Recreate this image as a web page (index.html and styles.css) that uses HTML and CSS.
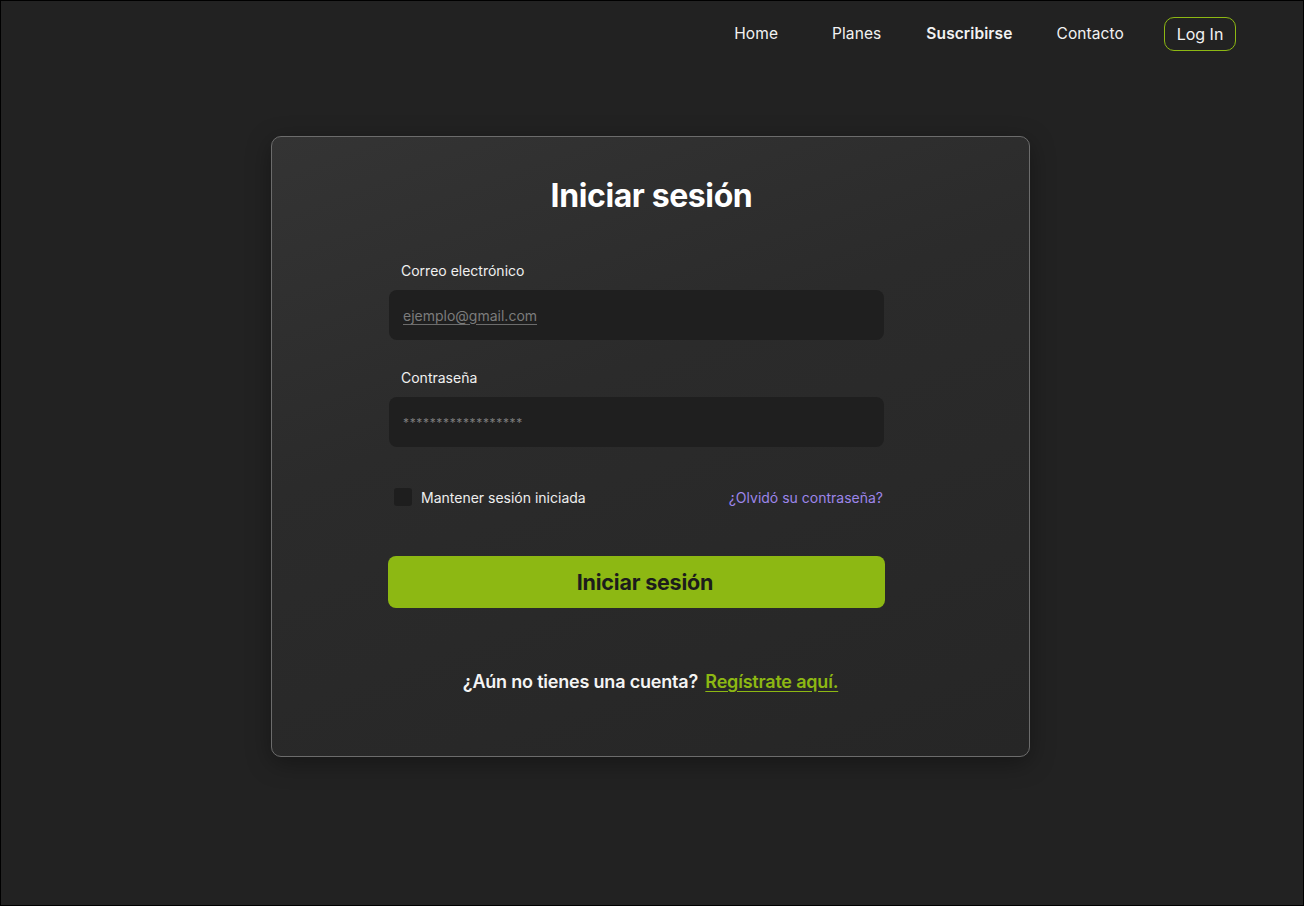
FILE: index.html
```html
<!DOCTYPE html>
<html lang="es">
<head>
<meta charset="utf-8">
<title>Iniciar sesión</title>
<link rel="stylesheet" href="styles.css">
</head>
<body>
<div class="frame">
  <header class="topbar">
    <nav class="nav">
      <a class="nav-link" href="#">Home</a>
      <a class="nav-link" href="#">Planes</a>
      <a class="nav-link nav-strong" href="#">Suscribirse</a>
      <a class="nav-link" href="#">Contacto</a>
      <a class="nav-login" href="#">Log In</a>
    </nav>
  </header>
  <main class="main">
    <section class="card">
      <h1 class="card-title">Iniciar sesión</h1>
      <form class="form">
        <label class="field">
          <span class="field-label">Correo electrónico</span>
          <span class="input"><span class="placeholder placeholder-email">ejemplo@gmail.com</span></span>
        </label>
        <label class="field">
          <span class="field-label">Contraseña</span>
          <span class="input"><span class="placeholder placeholder-pass">******************</span></span>
        </label>
        <div class="options">
          <label class="remember"><span class="checkbox"></span><span>Mantener sesión iniciada</span></label>
          <a class="forgot" href="#">¿Olvidó su contraseña?</a>
        </div>
        <button class="submit" type="button">Iniciar sesión</button>
      </form>
      <p class="signup">¿Aún no tienes una cuenta? <a class="signup-link" href="#">Regístrate aquí.</a></p>
    </section>
  </main>
</div>
</body>
</html>
```
FILE: styles.css
```css
* { box-sizing: border-box; }
html, body { margin: 0; padding: 0; }
body {
  background: #000;
  font-family: "Inter", "Liberation Sans", sans-serif;
  color: #fff;
}
.frame {
  width: 1304px;
  height: 906px;
  border: 1px solid #000;
  background: #222222;
  display: flex;
  flex-direction: column;
}
.topbar {
  display: flex;
  justify-content: flex-end;
  padding: 16px 67px 0 0;
  height: 135px;
}
.nav {
  display: flex;
  align-items: center;
  height: 33px;
}
.nav-link {
  color: #f2f2f2;
  text-decoration: none;
  font-size: 15.5px;
  letter-spacing: 0.1px;
}
.nav-link:nth-child(1) { margin-right: 54px; }
.nav-link:nth-child(2) { margin-right: 45px; }
.nav-link:nth-child(3) { margin-right: 44px; }
.nav-link:nth-child(4) { margin-right: 40px; }
.nav-strong { font-weight: 600; }
.nav-login {
  display: flex;
  align-items: center;
  justify-content: center;
  width: 72px;
  height: 34px;
  margin-top: 1px;
  border: 1px solid #8db813;
  border-radius: 10px;
  color: #f2f2f2;
  text-decoration: none;
  font-size: 16px;
}
.main {
  display: flex;
  justify-content: center;
  padding-right: 3px;
}
.card {
  width: 759px;
  height: 621px;
  border: 1px solid #6c6c6c;
  border-radius: 10px;
  background: linear-gradient(160deg, #343434 0%, #2b2b2b 40%, #262626 100%);
  box-shadow: 0 6px 24px rgba(0,0,0,0.35);
  display: flex;
  flex-direction: column;
  align-items: center;
  padding-top: 39px;
}
.card-title {
  margin: 0;
  font-size: 32px;
  font-weight: 700;
  letter-spacing: -0.4px;
  line-height: 40px;
  margin-left: 2px;
}
.form {
  align-self: flex-start;
  width: 497px;
  margin-top: 46px;
  margin-left: 116px;
  display: flex;
  flex-direction: column;
}
.field {
  display: flex;
  flex-direction: column;
  margin-bottom: 29px;
}
.field + .field { margin-bottom: 0; }
.field-label {
  font-size: 14px;
  color: #f0f0f0;
  padding-left: 13px;
  line-height: 18px;
  margin-bottom: 10px;
}
.input {
  height: 50px;
  background: #1f1f1f;
  border-radius: 8px;
  display: flex;
  align-items: center;
  padding-left: 14px;
  margin-left: 1px;
  margin-right: 1px;
}
.placeholder {
  font-size: 14px;
  color: #7c7c7c;
}
.placeholder-email {
  text-decoration: underline;
  text-decoration-color: #6c6c6c;
  text-underline-offset: 3px;
}
.placeholder-pass {
  font-size: 12px;
  letter-spacing: 0.65px;
}
.options {
  display: flex;
  justify-content: space-between;
  align-items: center;
  margin-top: 40px;
  padding: 0 2px 0 6px;
  height: 20px;
}
.remember {
  display: flex;
  align-items: center;
  font-size: 14px;
  color: #eeeeee;
}
.checkbox {
  width: 18px;
  height: 18px;
  background: #1e1e1e;
  border-radius: 3px;
  margin-right: 9px;
}
.forgot {
  font-size: 14px;
  color: #9d86ea;
  text-decoration: none;
}
.submit {
  margin-top: 49px;
  height: 52px;
  width: 497px;
  border: none;
  border-radius: 8px;
  background: #8db813;
  color: #1c1c1c;
  font-family: inherit;
  font-size: 21.5px;
  font-weight: 700;
  letter-spacing: -0.2px;
  padding-left: 23px;
}
.signup {
  margin: 63px 0 0 0;
  font-size: 18px;
  font-weight: 600;
  color: #f4f4f4;
  letter-spacing: -0.2px;
}
.signup-link {
  color: #8db813;
  margin-left: 3px;
  text-decoration: underline;
  text-underline-offset: 3px;
}
```
